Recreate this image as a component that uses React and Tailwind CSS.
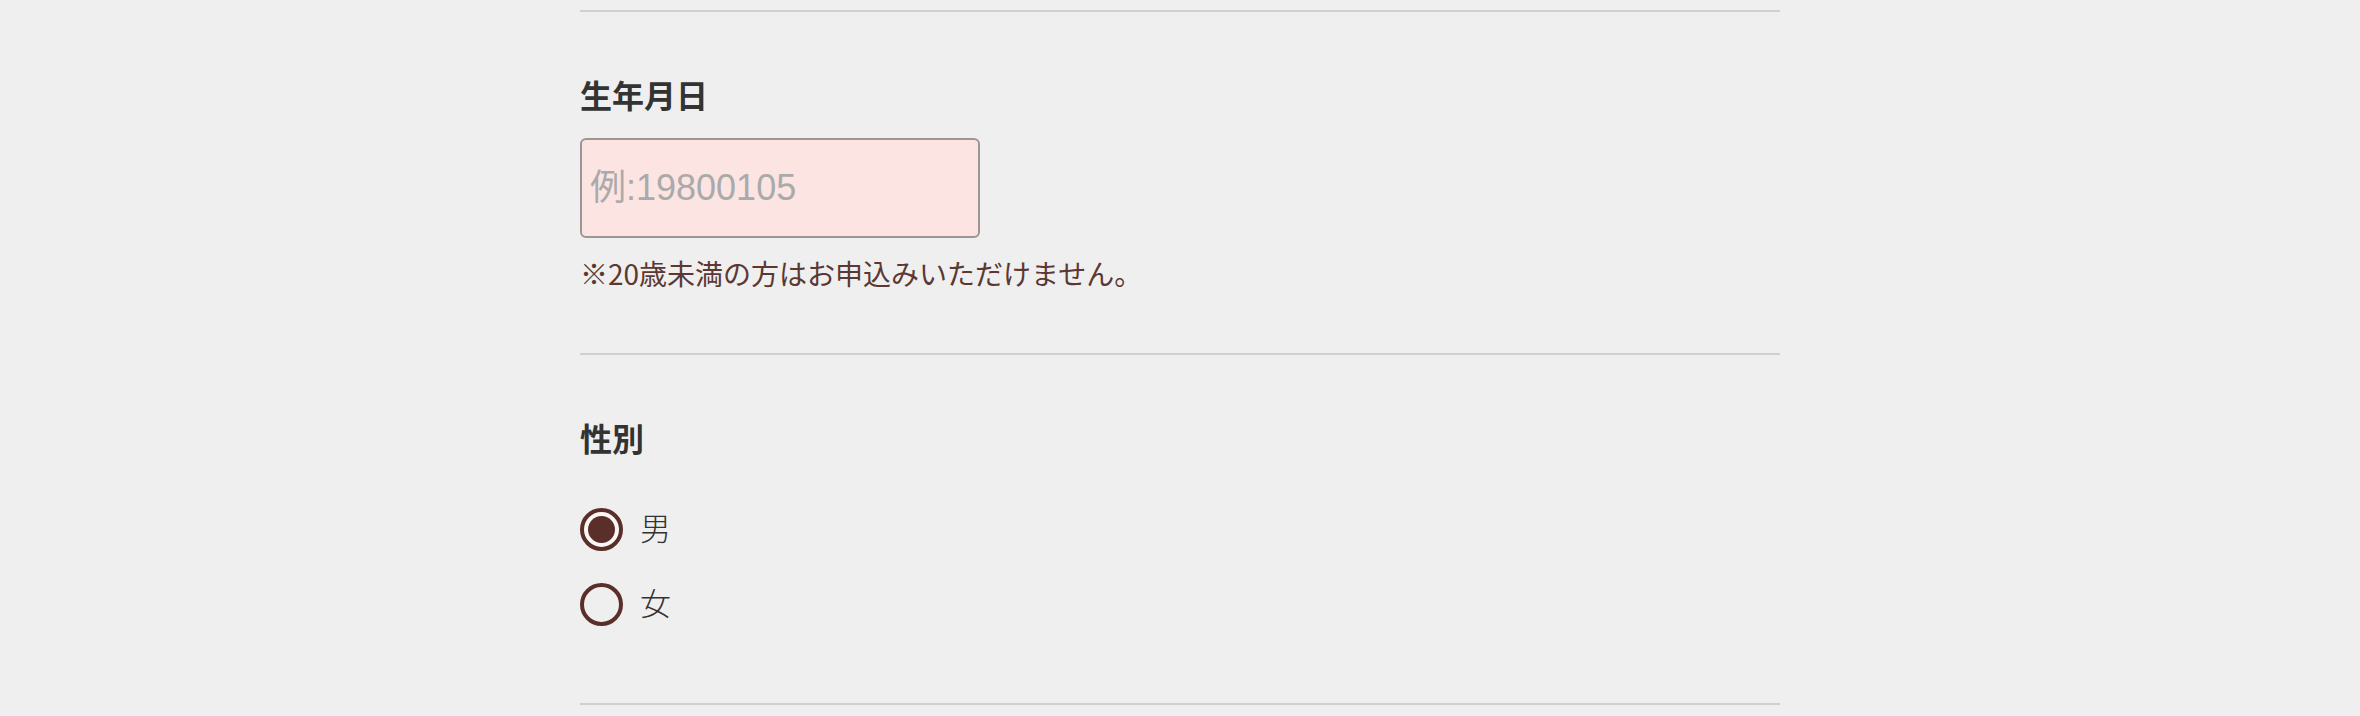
import React from "react";

const jp = { fontFamily: '"Noto Sans CJK JP", "Noto Sans", sans-serif' };

function Radio({ checked, label }) {
  return (
    <label className="flex items-center h-[44px] cursor-pointer">
      <span
        className={
          checked
            ? "w-[43px] h-[43px] rounded-full border-[4px] border-[#5a2f29] bg-[#fbf7f6] flex items-center justify-center box-border"
            : "w-[43px] h-[43px] rounded-full border-[4px] border-[#5a2f29] bg-[#efefef] flex items-center justify-center box-border"
        }
      >
        {checked ? <span className="w-[27px] h-[27px] rounded-full bg-[#5a2f29]" /> : null}
      </span>
      <span className="ml-[17px] pb-[5px] text-[31px] leading-[44px] font-light text-[#333333]">{label}</span>
    </label>
  );
}

export default function App() {
  return (
    <div className="min-h-[716px] bg-[#efefef] pt-[10px]" style={jp}>
      <div className="w-[1200px] mx-auto">
        <div className="border-t-2 border-[#d0d0d0]" />
        <section className="pt-[61px] pb-[61px]">
          <h2 className="text-[32px] leading-[42px] font-bold text-[#333333]">生年月日</h2>
          <input
            type="text"
            placeholder="例:19800105"
            className="mt-[23px] block w-[400px] h-[100px] box-border border-2 border-[#9d9593] rounded-[6px] bg-[#fce4e2] px-[8px] text-[36px] text-[#333333] placeholder:text-[#aaaaaa] outline-none"
            style={{ fontFamily: '"Liberation Sans", "Noto Sans CJK JP", sans-serif' }}
          />
          <p className="mt-[17px] mb-[1px] text-[28px] leading-[36px] text-[#5b3832]">※20歳未満の方はお申込みいただけません。</p>
        </section>
        <div className="border-t-2 border-[#d0d0d0]" />
        <section className="pt-[61px] pb-[77px]">
          <h2 className="text-[32px] leading-[42px] font-bold text-[#333333]">性別</h2>
          <div className="mt-[49px] flex flex-col gap-[31px]">
            <Radio checked label="男" />
            <Radio label="女" />
          </div>
        </section>
        <div className="border-t-2 border-[#d0d0d0]" />
      </div>
    </div>
  );
}
